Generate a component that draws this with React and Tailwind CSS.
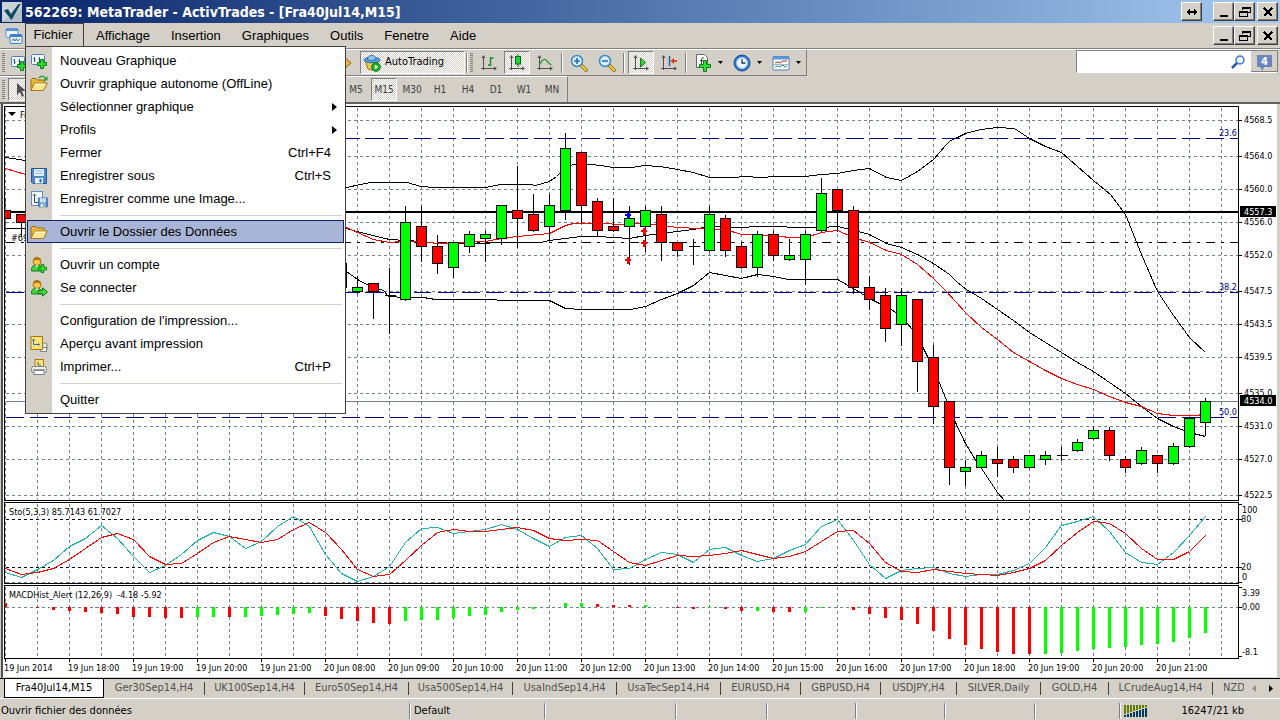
import React from 'react';
import clsx from 'clsx';

const TAHOMA = "font-['DejaVu_Sans_Condensed','DejaVu_Sans',sans-serif] [font-stretch:condensed]";
const PRESSED =
  'border border-t-[#808080] border-l-[#808080] border-b-white border-r-white bg-[conic-gradient(#fff_25%,#d4d0c8_25%_50%,#fff_50%_75%,#d4d0c8_75%)] bg-[length:2px_2px]';

const GRAY = '#708090';
const UP = '#00ff00';
const DOWN = '#ff0000';

/* ---------- data ---------- */

// [bar index, direction, body top, body bottom, wick top, wick bottom]
const candles = [
  [0, 'd', 210, 218, 197, 230],
  [1, 'd', 214, 222, 214, 235],
  [21, 'd', 263, 287, 263, 287],
  [22, 'u', 287, 291, 275, 292],
  [23, 'd', 283, 291, 283, 317],
  [24, 'x', 295, 295, 267, 332],
  [25, 'u', 222, 299, 205, 299],
  [26, 'd', 226, 246, 205, 260],
  [27, 'd', 246, 263, 234, 272],
  [28, 'u', 242, 267, 242, 276],
  [29, 'u', 234, 246, 230, 251],
  [30, 'u', 234, 238, 230, 260],
  [31, 'u', 205, 238, 205, 243],
  [32, 'd', 210, 218, 165, 246],
  [33, 'd', 214, 230, 193, 230],
  [34, 'u', 205, 226, 193, 238],
  [35, 'u', 148, 210, 132, 218],
  [36, 'd', 152, 205, 152, 222],
  [37, 'd', 201, 230, 197, 234],
  [38, 'd', 226, 230, 197, 230],
  [39, 'u', 218, 226, 205, 263],
  [40, 'u', 210, 226, 205, 250],
  [41, 'd', 214, 242, 205, 259],
  [42, 'd', 242, 250, 242, 255],
  [43, 'x', 246, 246, 238, 263],
  [44, 'u', 214, 250, 205, 250],
  [45, 'd', 218, 250, 214, 255],
  [46, 'd', 246, 267, 242, 267],
  [47, 'u', 234, 267, 230, 275],
  [48, 'd', 234, 255, 230, 259],
  [49, 'u', 255, 259, 238, 259],
  [50, 'u', 234, 259, 230, 283],
  [51, 'u', 193, 230, 177, 230],
  [52, 'd', 189, 210, 189, 230],
  [53, 'd', 210, 287, 205, 292],
  [54, 'd', 287, 299, 275, 308],
  [55, 'd', 295, 328, 287, 340],
  [56, 'u', 295, 324, 287, 344],
  [57, 'd', 299, 361, 299, 390],
  [58, 'd', 357, 406, 344, 422],
  [59, 'd', 401, 467, 401, 483],
  [60, 'u', 467, 471, 459, 484],
  [61, 'u', 455, 467, 450, 467],
  [62, 'd', 459, 463, 446, 475],
  [63, 'd', 459, 467, 455, 471],
  [64, 'u', 455, 467, 455, 467],
  [65, 'u', 455, 459, 450, 463],
  [66, 'x', 455, 455, 446, 459],
  [67, 'u', 442, 450, 438, 450],
  [68, 'u', 430, 438, 426, 438],
  [69, 'd', 430, 455, 426, 459],
  [70, 'd', 459, 467, 455, 471],
  [71, 'u', 450, 463, 446, 463],
  [72, 'd', 455, 463, 455, 471],
  [73, 'u', 446, 463, 442, 463],
  [74, 'u', 418, 446, 418, 446],
  [75, 'u', 401, 422, 397, 434],
];

const upperBand =
  '5,157 25,160 346,187 360,184 370,182 407,182 420,186 435,187 485,187 500,184 530,184 535,185 549,181 556,176 565,167 573,164 590,164 600,165 613,167 632,167 643,165 660,166 677,169 693,172 709,177 733,177 745,176 760,177 775,176 805,176 821,174 837,173 853,170 869,168 886,177 901,180 917,171 933,159 945,145 950,140 957,137 965,133 980,129 997,127 1014,128 1029,138 1045,146 1061,152 1077,166 1093,180 1110,194 1125,214 1141,254 1157,291 1173,315 1189,337 1205,352';
const middleBand =
  '5,228 346,228 360,232 389,239 405,240 421,241 437,243 460,243 480,243 500,242 540,242 549,240 565,238 581,236 597,236 613,237 629,238 645,235 661,233 693,229 709,226 740,227 757,226 783,226 790,227 821,227 837,226 850,229 869,234 886,243 901,247 917,254 933,263 949,274 957,282 966,289 981,298 997,309 1013,320 1029,332 1045,342 1061,352 1077,362 1093,371 1109,382 1125,393 1141,406 1157,418 1173,426 1189,432 1205,436';
const lowerBand =
  '346,271 357,279 370,286 383,290 388,296 405,297 423,297 435,299 493,299 500,300 549,300 565,308 581,309 630,309 645,306 661,299 677,293 693,285 709,272 741,278 757,274 773,276 788,279 837,279 853,288 869,298 885,306 901,315 917,336 928,358 940,385 955,422 965,443 976,461 981,468 997,492 1004,500';
const redAverage =
  '5,168 25,174 346,227 357,232 373,239 389,242 400,241 421,241 437,243 460,242 485,241 501,238 517,236 549,233 565,225 573,223 597,223 625,224 640,223 661,225 677,227 700,228 725,229 741,234 773,235 789,237 805,237 821,232 837,230 853,237 869,242 886,250 901,254 917,264 933,278 945,290 965,312 981,327 997,339 1013,352 1029,361 1045,370 1061,378 1077,384 1093,389 1109,396 1125,402 1141,406 1157,413 1173,415 1197,415 1205,413';

// oscillator values, in thirds of a pixel under the panel's top
const stochMain = [
  230, 247, 222, 195, 152, 129, 89, 129, 184, 230, 210, 178, 134, 112, 124, 158, 138, 94, 64, 92,
  176, 234, 259, 242, 212, 140, 100, 97, 113, 109, 103, 86, 103, 129, 153, 125, 121, 160, 223, 220,
  191, 172, 178, 202, 161, 156, 181, 197, 189, 166, 148, 93, 73, 135, 206, 250, 225, 220, 217, 235,
  242, 238, 236, 226, 203, 157, 90, 78, 64, 107, 170, 202, 206, 171, 120, 64,
];
const stochSignal = [
  220, 236, 232, 219, 191, 160, 125, 115, 133, 183, 208, 205, 175, 142, 124, 131, 142, 131, 101, 82,
  110, 163, 222, 244, 238, 195, 150, 112, 103, 107, 109, 101, 97, 106, 130, 136, 133, 136, 168, 202,
  211, 196, 181, 184, 181, 173, 166, 178, 190, 184, 169, 137, 107, 104, 143, 200, 227, 232, 223,
  227, 233, 238, 239, 232, 219, 196, 151, 110, 79, 83, 113, 160, 193, 193, 167, 121,
];

// signed bar height in pixels; negative hangs below zero
const macd = [
  4, 0, -1, -3, -4, -5, -6, -7, -10, -10, -11, -11, -10, -10, -10, -10, -9, -8, -7, -6, -9, -12, -14,
  -16, -17, -14, -13, -13, -11, -9, -8, -5, -3, -2, 0, 4, 4, 3, 2, 2, 2, 0, -1, -2, -1, -2, -4, -4,
  -5, -5, -5, -1, 0, -3, -7, -11, -13, -17, -24, -32, -38, -42, -45, -47, -47, -47, -46, -44, -42,
  -41, -40, -38, -37, -35, -31, -26,
];
const macdGreen = [
  12, 13, 15, 16, 17, 18, 19, 25, 26, 27, 28, 29, 30, 31, 32, 33, 35, 36, 40, 44, 47, 50, 51, 65, 66,
  67, 68, 69, 70, 71, 72, 73, 74, 75,
];

const priceLabels = [
  [120, '4568.5'],
  [156, '4564.0'],
  [189, '4560.0'],
  [222, '4556.0'],
  [255, '4552.0'],
  [291, '4547.5'],
  [324, '4543.5'],
  [357, '4539.5'],
  [393, '4535.0'],
  [426, '4531.0'],
  [459, '4527.0'],
  [495, '4522.5'],
];

const timeLabels = [
  '19 Jun 2014',
  '19 Jun 18:00',
  '19 Jun 19:00',
  '19 Jun 20:00',
  '19 Jun 21:00',
  '20 Jun 08:00',
  '20 Jun 09:00',
  '20 Jun 10:00',
  '20 Jun 11:00',
  '20 Jun 12:00',
  '20 Jun 13:00',
  '20 Jun 14:00',
  '20 Jun 15:00',
  '20 Jun 16:00',
  '20 Jun 17:00',
  '20 Jun 18:00',
  '20 Jun 19:00',
  '20 Jun 20:00',
  '20 Jun 21:00',
];

const barX = i => 5 + i * 16;
const gridX = Array.from({ length: 39 }, (_, i) => 5 + i * 32);

/* ---------- icons ---------- */

const Icon = ({ size = 18, className, children }) => (
  <svg width={size} height={size} viewBox="0 0 18 18" fill="none" className={clsx('shrink-0', className)} aria-hidden="true">
    {children}
  </svg>
);

const Plus = ({ x, y, s = 10 }) => (
  <path
    transform={`translate(${x} ${y}) scale(${s / 10})`}
    d="M3.500.5h3v3h3v3h-3v3h-3v-3h-3v-3h3z"
    fill="#2fe02f"
    stroke="#0a7d14"
  />
);

const NewChartIcon = () => (
  <Icon>
    <rect x="1.500" y="2.500" width="13" height="10" rx="1" fill="#f4f9ff" stroke="#4a7fc1" />
    <path d="M4.500 5v5M3.500 6.500h1M4.500 8.500h1M9.500 5v5M8.500 7h1" stroke="#28517f" />
    <Plus x={7} y={7} />
  </Icon>
);

const FolderShape = () => (
  <>
    <path d="M1 15V4.500l1-1h4l1.500 1.500h6l1 1V8" fill="#e8b93c" stroke="#9a6c0b" />
    <path d="M1 15.500 4.500 8h12.800L13.500 15.500z" fill="#fce594" stroke="#a87a12" />
    <path d="M5 9.200h10.500" stroke="#fffbe0" />
  </>
);

const OpenOfflineIcon = () => (
  <Icon>
    <FolderShape />
    <path d="M9 3c2-2.500 5-2.300 6.500.5" stroke="#27a32c" strokeWidth="1.500" />
    <path d="M17.500 1v4.500H13z" fill="#27a32c" />
  </Icon>
);

const FolderIcon = () => (
  <Icon>
    <FolderShape />
  </Icon>
);

const DiskShape = () => (
  <>
    <path d="M1.500 1.500h15v15H3l-1.500-1.500z" fill="#4f88c9" stroke="#1f5797" />
    <rect x="4" y="2" width="10" height="7" fill="#dfeefc" />
    <path d="M5.500 4h7M5.500 6.500h7" stroke="#9fc0e2" />
    <rect x="5" y="11" width="8" height="5.500" fill="#e9f3fd" />
    <rect x="9.500" y="12" width="2" height="3.500" fill="#2d66a8" />
  </>
);

const SaveIcon = () => (
  <Icon>
    <DiskShape />
  </Icon>
);

const SaveImageIcon = () => (
  <Icon>
    <rect x="1.500" y="1.500" width="11" height="14" fill="#f4f9ff" stroke="#5d8ec6" />
    <path d="M4.500 4v8.500H8M3 5.500l1.500-1.500L6 5.500" stroke="#28517f" />
    <g transform="translate(7.500 7) scale(.6)">
      <DiskShape />
    </g>
  </Icon>
);

const PersonShape = () => (
  <>
    <path d="M1.500 15c-.5-4 1.500-6 5-6s6 2 5.500 6z" fill="#46d23e" stroke="#15801c" />
    <circle cx="7" cy="5.500" r="4" fill="#f7c948" stroke="#a86f10" />
    <path d="M3 5c0-5 8-5 8 0-2-1.500-6-1.500-8 0z" fill="#b07418" />
    <path d="m5.500 9.500 1.500 2 1.500-2" fill="#fff" />
  </>
);

const AccountIcon = () => (
  <Icon>
    <PersonShape />
    <Plus x={8} y={8} s={9} />
  </Icon>
);

const ConnectIcon = () => (
  <Icon>
    <PersonShape />
    <path d="M8 11.500h4.500V8.800l5 4.200-5 4.200v-2.700H8z" fill="#3fdc3a" stroke="#0a7d14" />
  </Icon>
);

const PreviewIcon = () => (
  <Icon>
    <rect x="10" y="8" width="7" height="7" rx="1.500" fill="#e4e2dc" stroke="#7e8288" />
    <rect x="10.500" y="12.500" width="6" height="4" fill="#fff" stroke="#7e8288" />
    <rect x="1" y="1.500" width="11.500" height="13" fill="#fde277" stroke="#a87a12" />
    <path d="M3.500 4v5.500h6M3.500 4l-1 1.500M3.500 4l1 1.500M9.500 9.500 8 8.500M9.500 9.500 8 10.500" stroke="#3a6ea5" />
  </Icon>
);

const PrintIcon = () => (
  <Icon>
    <rect x="5" y="1.500" width="8.500" height="8" fill="#fde277" stroke="#a87a12" />
    <path d="M8 3.500V7h3" stroke="#3a6ea5" />
    <rect x="1.500" y="8.500" width="15" height="6" rx="2" fill="#efede8" stroke="#7e8288" />
    <path d="M3 11.500h12" stroke="#9da1a6" />
    <rect x="4" y="12.500" width="10" height="4" fill="#fff" stroke="#7e8288" />
  </Icon>
);

const Axes = () => (
  <>
    <path d="M3.500 3v13M1 14.500h14" stroke="#505050" />
    <path d="M3.500 1 5.500 4h-4zM17 14.500l-3 2v-4z" fill="#505050" />
  </>
);

const BarChartIcon = () => (
  <Icon>
    <Axes />
    <path d="M10.500 3v9M10.500 4h3M8 11h2.500" stroke="#1c8c28" strokeWidth="1.500" />
  </Icon>
);

const CandleChartIcon = () => (
  <Icon>
    <Axes />
    <path d="M10 0v13" stroke="#0a6c14" />
    <rect x="7.500" y="2.500" width="5" height="7.500" fill="#22d636" stroke="#0a6c14" />
  </Icon>
);

const LineChartIcon = () => (
  <Icon>
    <Axes />
    <path d="M3 11c4-6 6-7 8-4 1.500 2 2.500 3 4.500 4" stroke="#2b9c38" strokeWidth="1.300" />
  </Icon>
);

const ZoomIcon = ({ out }) => (
  <Icon>
    <path d="m11 11 5 5" stroke="#8c6a10" strokeWidth="3.600" strokeLinecap="round" />
    <path d="m11 11 5 5" stroke="#f5cb3f" strokeWidth="2" strokeLinecap="round" />
    <circle cx="7" cy="7" r="5.500" fill="#d8efff" stroke="#3b87c4" strokeWidth="1.500" />
    <path d={out ? 'M4 7h6' : 'M4 7h6M7 4v6'} stroke="#2a6db0" strokeWidth="1.600" />
  </Icon>
);

const AutoScrollIcon = () => (
  <Icon>
    <Axes />
    <path d="M8.500 4v9l5-4.500z" fill="#35d23a" stroke="#13801d" />
  </Icon>
);

const ChartShiftIcon = () => (
  <Icon>
    <Axes />
    <path d="M9.500 2v10" stroke="#1f5fb0" strokeWidth="1.500" />
    <path d="M17 7h-4" stroke="#b32a10" strokeWidth="1.500" />
    <path d="M10.500 7 14 4v6z" fill="#d2381a" />
  </Icon>
);

const IndicatorIcon = () => (
  <Icon>
    <path d="M2.500.5h8l3 3v10h-11z" fill="#fff" stroke="#606870" />
    <path d="M10 4c-2-.8-2.500 0-2.500 2v5M6 6.500h3.500" stroke="#404850" />
    <path d="M9.500 6.500h3v4h4v3h-4v4h-3v-4h-4v-3h4z" fill="#2fe02f" stroke="#0a7d14" />
  </Icon>
);

const ClockIcon = () => (
  <Icon>
    <circle cx="9" cy="9" r="8" fill="#2f76cc" stroke="#174f96" />
    <circle cx="9" cy="9" r="5.500" fill="#eef6ff" stroke="#9cc4ee" />
    <path d="M9 5v4h3.500" stroke="#1e3c66" strokeWidth="1.300" />
  </Icon>
);

const TemplateIcon = () => (
  <Icon>
    <rect x="1" y="2.500" width="16" height="13.500" rx="1" fill="#fff" stroke="#4a82c4" />
    <path d="M1 4h16" stroke="#5c97d8" strokeWidth="3" />
    <path d="m3 9 3-1 2 1 3-2 4 0" stroke="#a5321c" />
    <path d="m3 13 3-1 2 1 3-2 2 2 2-1" stroke="#27923a" />
    <path d="M1 10.500h16" stroke="#8db7e6" />
  </Icon>
);

const AutoTradingIcon = () => (
  <Icon>
    <path d="M2.500 7.500 5 15l6 1.500L15 8z" fill="#f2c74b" stroke="#a17412" />
    <ellipse cx="9" cy="6" rx="8" ry="2.800" fill="#5aa4de" stroke="#2a6ea8" />
    <path d="M4.500 5.500c0-5.500 8.500-5.500 8.500 0-2 1.200-6.500 1.200-8.500 0z" fill="#8cc8f2" stroke="#2a6ea8" />
    <circle cx="13" cy="13" r="4.300" fill="#1eb52c" stroke="#0c7a18" />
    <path d="m11.800 10.800 3.500 2.200-3.500 2.200z" fill="#fff" />
  </Icon>
);

const MdiIcon = () => (
  <Icon>
    <rect x="1" y="1.500" width="12" height="9" rx="1" fill="#eaf4ff" stroke="#5b93d6" />
    <path d="M1 3h12" stroke="#5b93d6" strokeWidth="2" />
    <rect x="5" y="7.500" width="12" height="9" rx="1" fill="#eaf4ff" stroke="#3f7fcf" />
    <path d="M5 9h12" stroke="#3f7fcf" strokeWidth="2" />
    <path d="m7 14 1.500-2.500L10 14l1.500-2.500L13 14l2-2" stroke="#3a6fb8" />
  </Icon>
);

const LogoIcon = () => (
  <svg width="20" height="20" viewBox="0 0 20 20" className="shrink-0" aria-hidden="true">
    <rect width="20" height="20" fill="#c9d3d8" />
    <path d="M0 20 20 6v14z" fill="#b4c2c8" />
    <path d="M2 8.500 6 7l3 5 7-9.500 3-1L9.500 18z" fill="#0f4a66" />
  </svg>
);

/* ---------- window chrome ---------- */

const Caption = ({ label, children }) => (
  <button
    aria-label={label}
    className="flex h-[19px] w-[21px] items-center justify-center border border-white border-r-[#404040] border-b-[#404040] bg-[#d4d0c8] shadow-[inset_-1px_-1px_0_#808080]"
  >
    <svg width="14" height="12" viewBox="0 0 14 12" fill="none" stroke="#000" shapeRendering="crispEdges" aria-hidden="true">
      {children}
    </svg>
  </button>
);

const CaptionGroup = () => (
  <div className="flex">
    <Caption label="Réduire">
      <path d="M3 10h8" strokeWidth="2" />
    </Caption>
    <Caption label="Restaurer">
      <path d="M4.500 4V1.500h8v5H10M4 2h9" />
      <path d="M1.500 5.500h8v5h-8zM1 6.500h9" />
    </Caption>
    <div className="ml-[2px]">
      <Caption label="Fermer">
        <path d="m3 2 8 8M11 2l-8 8" strokeWidth="2" />
      </Caption>
    </div>
  </div>
);

const TitleBar = () => (
  <header className="flex h-[23px] items-center gap-[3px] bg-linear-to-r from-[#0a246a] to-[#a6caf0] pr-[2px] pl-[2px]">
    <LogoIcon />
    <h1 className={clsx(TAHOMA, 'grow text-sm font-bold whitespace-nowrap text-white')}>
      562269: MetaTrader - ActivTrades - [Fra40Jul14,M15]
    </h1>
    <div className="mr-[8px]">
      <Caption label="Étendre">
        <path d="M2 6h10" strokeWidth="2" />
        <path d="M4.500 3v6M3.500 4v4M2.500 5v2M9.500 3v6M10.500 4v4M11.500 5v2" />
      </Caption>
    </div>
    <CaptionGroup />
  </header>
);

const fileMenu = [
  { label: 'Nouveau Graphique', icon: <NewChartIcon /> },
  { label: 'Ouvrir graphique autonome (OffLine)', icon: <OpenOfflineIcon /> },
  { label: 'Sélectionner graphique', sub: true },
  { label: 'Profils', sub: true },
  { label: 'Fermer', keys: 'Ctrl+F4' },
  { label: 'Enregistrer sous', icon: <SaveIcon />, keys: 'Ctrl+S' },
  { label: 'Enregistrer comme une Image...', icon: <SaveImageIcon /> },
  null,
  { label: 'Ouvrir le Dossier des Données', icon: <FolderIcon />, active: true },
  null,
  { label: 'Ouvrir un compte', icon: <AccountIcon /> },
  { label: 'Se connecter', icon: <ConnectIcon /> },
  null,
  { label: "Configuration de l'impression..." },
  { label: 'Aperçu avant impression', icon: <PreviewIcon /> },
  { label: 'Imprimer...', icon: <PrintIcon />, keys: 'Ctrl+P' },
  null,
  { label: 'Quitter' },
];

const FileMenu = () => (
  <div
    role="menu"
    className="absolute top-full left-0 z-10 w-[321px] border border-[#404040] bg-[linear-gradient(to_right,#d4d0c8_26px,#fff_26px)] px-px py-[2px] text-[13px] text-black"
  >
    {fileMenu.map((item, i) =>
      item ? (
        <button
          key={item.label}
          role="menuitem"
          className={clsx(
            'flex h-[23px] w-full items-center border pr-[12px] pl-px text-left',
            item.active ? 'border-[#0a246a] bg-[#a9b5d6]' : 'border-transparent'
          )}
        >
          <span className="flex w-[31px] shrink-0 pl-px">{item.icon}</span>
          <span className="grow whitespace-nowrap">{item.label}</span>
          {item.keys && <span>{item.keys}</span>}
          {item.sub && (
            <svg width="10" height="8" viewBox="0 0 10 8" className="-mr-[6px]" aria-hidden="true">
              <path d="M5 0v8l5-4z" />
            </svg>
          )}
        </button>
      ) : (
        <div key={i} className="flex h-[10px] items-center pr-[2px] pl-[33px]">
          <div className="h-px w-full bg-[#d4d0c8]" />
        </div>
      )
    )}
  </div>
);

const MenuBar = () => (
  <nav className="flex h-[26px] items-center border-b border-[#808080] pr-[2px] pl-[5px] text-[13px] text-black">
    <MdiIcon />
    <div className="relative ml-[2px] flex h-[23px] self-start">
      <button className="w-[59px] border border-b-0 border-[#404040] pr-[3px]">Fichier</button>
      <FileMenu />
    </div>
    {['Affichage', 'Insertion', 'Graphiques', 'Outils', 'Fenetre', 'Aide'].map(name => (
      <button key={name} className="ml-[3px] px-[9px]">
        {name}
      </button>
    ))}
    <div className="ml-auto">
      <CaptionGroup />
    </div>
  </nav>
);

/* ---------- toolbars ---------- */

const Grip = () => (
  <div className="mx-[2px] h-[19px] w-[3px] shrink-0 bg-[repeating-linear-gradient(to_bottom,#808080_0_1px,#d4d0c8_1px_2px)]" />
);

const Divider = ({ className = 'mx-[2px]' }) => (
  <div className={clsx('h-[20px] w-[2px] shrink-0 border-l border-[#808080] bg-white', className)} />
);

const Tool = ({ label, pressed, drop, children }) => (
  <button
    aria-label={label}
    className={clsx(
      'flex h-[23px] items-center justify-center',
      drop && 'w-[39px] gap-[6px]',
      pressed && [PRESSED, 'mx-px w-[26px]'],
      !drop && !pressed && 'w-[28px]'
    )}
  >
    {children}
    {drop && (
      <svg width="5" height="3" viewBox="0 0 5 3" aria-hidden="true">
        <path d="M0 0h5L2.500 3z" />
      </svg>
    )}
  </button>
);

const StandardToolbar = () => (
  <div className="flex h-[27px] items-center border-t border-white">
    <div className="flex h-full items-center border-r border-b border-[#808080]">
      <Grip />
      <div className="flex w-[345px] items-center justify-between pl-[3px]">
        <NewChartIcon />
        <svg width="14" height="16" viewBox="0 0 14 16" aria-hidden="true">
          <path d="m6 2 7 6-7 6-5-6z" fill="#eebb3a" stroke="#8c5c08" />
        </svg>
      </div>
      <button className={clsx(TAHOMA, PRESSED, 'ml-[8px] flex h-[23px] w-[105px] items-center gap-[4px] pl-[2px] text-[11px] text-black')}>
        <AutoTradingIcon />
        AutoTrading
      </button>
      <Divider className="ml-px" />
      <Grip />
      <Tool label="Barres">
        <BarChartIcon />
      </Tool>
      <Tool label="Chandeliers" pressed>
        <CandleChartIcon />
      </Tool>
      <Tool label="Ligne">
        <LineChartIcon />
      </Tool>
      <Divider />
      <Tool label="Zoom avant">
        <ZoomIcon />
      </Tool>
      <Tool label="Zoom arrière">
        <ZoomIcon out />
      </Tool>
      <Divider />
      <Tool label="Défilement automatique" pressed>
        <AutoScrollIcon />
      </Tool>
      <Tool label="Décalage du graphique">
        <ChartShiftIcon />
      </Tool>
      <Divider />
      <Tool label="Indicateurs" drop>
        <IndicatorIcon />
      </Tool>
      <Tool label="Périodes" drop>
        <ClockIcon />
      </Tool>
      <Tool label="Modèles" drop>
        <TemplateIcon />
      </Tool>
    </div>
    <div className="mr-[2px] ml-auto flex h-[23px] w-[202px] self-start border border-[#808080] border-b-white bg-white">
      <input type="text" aria-label="Rechercher" className="w-0 grow px-1 text-xs outline-none" />
      <button aria-label="Lancer la recherche" className="w-[20px]">
        <svg width="14" height="14" viewBox="0 0 14 14" fill="none" aria-hidden="true">
          <circle cx="9" cy="5" r="4" fill="#eaf4ff" stroke="#3f74cc" strokeWidth="1.500" />
          <path d="m6 8-5 5" stroke="#2b55b8" strokeWidth="2.500" />
        </svg>
      </button>
      <button aria-label="4 messages" className="flex w-[26px] items-center justify-center border-b border-[#808080] bg-[#d4d0c8] pt-[3px]">
        <svg width="17" height="16" viewBox="0 0 17 16" aria-hidden="true">
          <path d="M1 0h15v12H8l-1.500 4L4 12H1z" fill="#6a86bd" />
          <text x="5" y="10" fontSize="10" fontWeight="bold" fill="#fff" className="font-['DejaVu_Sans',sans-serif]">
            4
          </text>
        </svg>
      </button>
    </div>
  </div>
);

const periods = ['M5', 'M15', 'M30', 'H1', 'H4', 'D1', 'W1', 'MN'];

const PeriodToolbar = () => (
  <div className="flex h-[26px] items-center">
    <div className="flex h-full items-center border-t border-r border-t-white border-r-[#808080] pr-px">
      <Grip />
      <button aria-label="Curseur" className={clsx(PRESSED, 'ml-px flex h-[23px] w-[26px] items-center justify-center')}>
        <svg width="12" height="16" viewBox="0 0 12 16" aria-hidden="true">
          <path d="M2 1v12l3-3 2 5 2-1-2-5h4z" fill="#505050" />
        </svg>
      </button>
      <div className="w-[308px]" />
      {periods.map(p => (
        <button
          key={p}
          className={clsx(TAHOMA, 'h-[23px] text-[10px] text-[#404040]', p === 'M15' ? [PRESSED, 'mx-px w-[26px]'] : 'w-[28px]')}
        >
          {p}
        </button>
      ))}
    </div>
  </div>
);

/* ---------- chart ---------- */

const Candle = ({ data: [i, dir, top, bottom, high, low] }) => {
  const x = barX(i);
  return (
    <g stroke="#000">
      <path d={`M${x} ${high}V${low + 1}`} />
      {dir === 'x' ? (
        <path d={`M${x - 5} ${top}h11`} />
      ) : (
        <rect x={x - 5} y={top} width="10" height={bottom - top} fill={dir === 'u' ? UP : DOWN} />
      )}
    </g>
  );
};

const Arrow = ({ x, y, color }) => <path d={`M${x - 3} ${y}h6M${x} ${y - 3}v7M${x + 1} ${y - 2}v5`} stroke={color} strokeWidth="2" />;

const stochPoints = values => values.map((v, i) => `${barX(i)},${495 + Math.round(v / 3)}`).join(' ');

const Chart = () => (
  <div className="border-t-2 border-t-[#606060] bg-[#d4d0c8] pr-[2px] pl-px">
    <div className="border-r border-b border-l-2 border-r-[#d4d0c8] border-b-[#d4d0c8] border-l-[#505050] bg-white">
      <svg viewBox="3 104 1274 573" fill="none" className="block h-auto w-full" role="img" aria-label="Fra40Jul14,M15">
        <defs>
          <clipPath id="plot">
            <rect x="5" y="106" width="1233" height="395" />
          </clipPath>
        </defs>
        <g transform="translate(.5 .5)" shapeRendering="crispEdges">
          {/* grid */}
          <g stroke={GRAY} strokeDasharray="3 3">
            {gridX.map(x => (
              <path key={x} d={`M${x} 107V500M${x} 503V583M${x} 586V658`} />
            ))}
            {priceLabels.map(([y]) => (
              <path key={y} d={`M5 ${y}H1238`} />
            ))}
            <path d="M5 582H1238M5 607H1238" />
          </g>

          {/* levels */}
          <path d="M5 138H1238M5 292H1238M5 417H1238" stroke="#000080" strokeDasharray="18 6" />
          <path d="M5 242H1238" stroke="#000" strokeDasharray="9 6 3 6" />
          <path d="M5 211H1238M5 212H1238" stroke="#000" />
          <path d="M5 401H1238" stroke={GRAY} />

          {/* bands, average and candles */}
          <g clipPath="url(#plot)">
            <g stroke="#000">
              <polyline points={upperBand} />
              <polyline points={middleBand} />
              <polyline points={lowerBand} />
            </g>
            <polyline points={redAverage} stroke={DOWN} />
            {candles.map(c => (
              <Candle key={c[0]} data={c} />
            ))}
            <Arrow x={627} y={214} color="#0000ff" />
            <Arrow x={643} y={230} color={DOWN} />
            <Arrow x={643} y={242} color={DOWN} />
            <Arrow x={627} y={259} color={DOWN} />
          </g>

          {/* stochastic */}
          <path d="M5 519H1238M5 567H1238" stroke="#000" strokeDasharray="3 3" />
          <polyline points={stochPoints(stochMain)} stroke="#20b2aa" />
          <polyline points={stochPoints(stochSignal)} stroke={DOWN} />

          {/* macd */}
          {macd.map((h, i) =>
            h === 0 ? null : (
              <rect
                key={i}
                x={i === 0 ? 4 : barX(i) - 2}
                y={(h > 0 ? 607 - h : 607) - 1}
                width={i === 0 ? 2 : 3}
                height={Math.abs(h)}
                fill={macdGreen.includes(i) ? UP : DOWN}
              />
            )
          )}

          {/* frames and ticks */}
          <g stroke="#000">
            <path d="M4 106H1238V500H4zM4 502H1238V583H4zM4 585H1238V658H4z" />
            {priceLabels.map(([y]) => (
              <path key={y} d={`M1238 ${y}h3`} />
            ))}
            <path d="M1238 504h3M1238 519h3M1238 567h3M1238 582h3M1238 587h3M1238 607h3M1238 656h3" />
            {timeLabels.map((label, i) => (
              <path key={label} d={`M${5 + i * 64} 658v3`} />
            ))}
          </g>
        </g>

        <path d="M8 112h8l-4 4z" fill="#000" />
        <rect x="1240" y="206" width="36" height="11" fill="#000" />
        <rect x="1240" y="395" width="36" height="11" fill="#000" />

        <g fontSize="9" fill="#000" className={TAHOMA}>
          <text x="20" y="118">Fra40Jul14,M15</text>
          <text x="11" y="241">#69</text>
          <text x="9" y="515">Sto(5,3,3) 85.7143 61.7027</text>
          <text x="9" y="598" className="whitespace-pre">
            {'MACDHist_Alert (12,26,9)  -4.18 -5.92'}
          </text>
          {priceLabels.map(([y, label]) => (
            <text key={label} x="1244" y={y + 3}>
              {label}
            </text>
          ))}
          <text x="1244" y="215" fill="#fff">4557.3</text>
          <text x="1244" y="404" fill="#fff">4534.0</text>
          <text x="1242" y="513">100</text>
          <text x="1241" y="522">80</text>
          <text x="1241" y="570">20</text>
          <text x="1242" y="580">0</text>
          <text x="1242" y="596">3.39</text>
          <text x="1242" y="610">0.00</text>
          <text x="1242" y="655">-8.1</text>
          <g fill="#000080" textAnchor="end">
            <text x="1237" y="136">23.6</text>
            <text x="1237" y="290">38.2</text>
            <text x="1237" y="415">50.0</text>
          </g>
          {timeLabels.map((label, i) => (
            <text key={label} x={4 + i * 64} y="671">
              {label}
            </text>
          ))}
        </g>
      </svg>
    </div>
  </div>
);

/* ---------- bottom bars ---------- */

const tabs = [
  { name: 'Fra40Jul14,M15', width: 'w-[100px]' },
  { name: 'Ger30Sep14,H4', width: 'w-[101px]' },
  { name: 'UK100Sep14,H4', width: 'w-[100px]' },
  { name: 'Euro50Sep14,H4', width: 'w-[104px]' },
  { name: 'Usa500Sep14,H4', width: 'w-[104px]' },
  { name: 'UsaIndSep14,H4', width: 'w-[104px]' },
  { name: 'UsaTecSep14,H4', width: 'w-[104px]' },
  { name: 'EURUSD,H4', width: 'w-[80px]' },
  { name: 'GBPUSD,H4', width: 'w-[80px]' },
  { name: 'USDJPY,H4', width: 'w-[76px]' },
  { name: 'SILVER,Daily', width: 'w-[84px]' },
  { name: 'GOLD,H4', width: 'w-[68px]' },
  { name: 'LCrudeAug14,H4', width: 'w-[104px]' },
];

const ChartTabs = () => (
  <div className={clsx(TAHOMA, 'flex h-[20px] border-t border-black pl-[4px] text-[11px] text-[#505050]')}>
    {tabs.map((tab, i) => (
      <button
        key={tab.name}
        className={clsx(
          'flex h-[19px] shrink-0 items-center justify-center whitespace-nowrap',
          tab.width,
          i === 0 && 'border border-t-0 border-black bg-white text-black'
        )}
      >
        <span className="grow">{tab.name}</span>
        {i > 0 && <span className="h-[13px] w-px bg-[#404040]" />}
      </button>
    ))}
    <button className="h-[19px] w-0 grow overflow-hidden pl-[10px] text-left">NZDUSD,H4</button>
    <div className="flex w-[36px] items-center justify-between pr-[7px] pl-[8px]">
      <button aria-label="Onglets précédents">
        <svg width="4" height="7" viewBox="0 0 4 7" aria-hidden="true">
          <path d="M4 0v7L0 3.500z" fill="#909090" />
        </svg>
      </button>
      <button aria-label="Onglets suivants">
        <svg width="4" height="7" viewBox="0 0 4 7" aria-hidden="true">
          <path d="M0 0v7l4-3.500z" fill="#000" />
        </svg>
      </button>
    </div>
  </div>
);

const cell = 'h-[16px] shrink-0 border-l border-[#808080] shadow-[inset_1px_0_0_#fff] pl-[4px]';

const StatusBar = () => (
  <footer className={clsx(TAHOMA, 'flex h-[22px] items-center border-t border-white pt-[3px] text-[11px] leading-4 text-black')}>
    <div className="grow pl-px">Ouvrir fichier des données</div>
    <div className={clsx(cell, 'w-[135px]')}>Default</div>
    <div className={clsx(cell, 'w-[131px]')} />
    <div className={clsx(cell, 'w-[91px]')} />
    <div className={clsx(cell, 'w-[89px]')} />
    <div className={clsx(cell, 'w-[89px]')} />
    <div className={clsx(cell, 'w-[90px]')} />
    <div className={clsx(cell, 'w-[85px]')} />
    <div className={clsx(cell, 'flex w-[161px] items-center')}>
      <svg width="24" height="13" viewBox="0 0 24 13" className="shrink-0" shapeRendering="crispEdges" aria-hidden="true">
        {[2, 3, 4, 5, 6, 7, 8, 9].map((h, i) => (
          <g key={h}>
            <rect x={i * 3} y="0" width="2" height={11 - h} fill="#667c00" />
            <rect x={i * 3} y={12 - h} width="2" height={h} fill="#003c5c" />
          </g>
        ))}
      </svg>
      <span className="grow pr-[36px] text-right">16247/21 kb</span>
    </div>
  </footer>
);

export default function App() {
  return (
    <div className="flex min-h-screen flex-col bg-[#d4d0c8] font-['Liberation_Sans',Arial,sans-serif]">
      <TitleBar />
      <MenuBar />
      <StandardToolbar />
      <PeriodToolbar />
      <Chart />
      <ChartTabs />
      <StatusBar />
    </div>
  );
}
